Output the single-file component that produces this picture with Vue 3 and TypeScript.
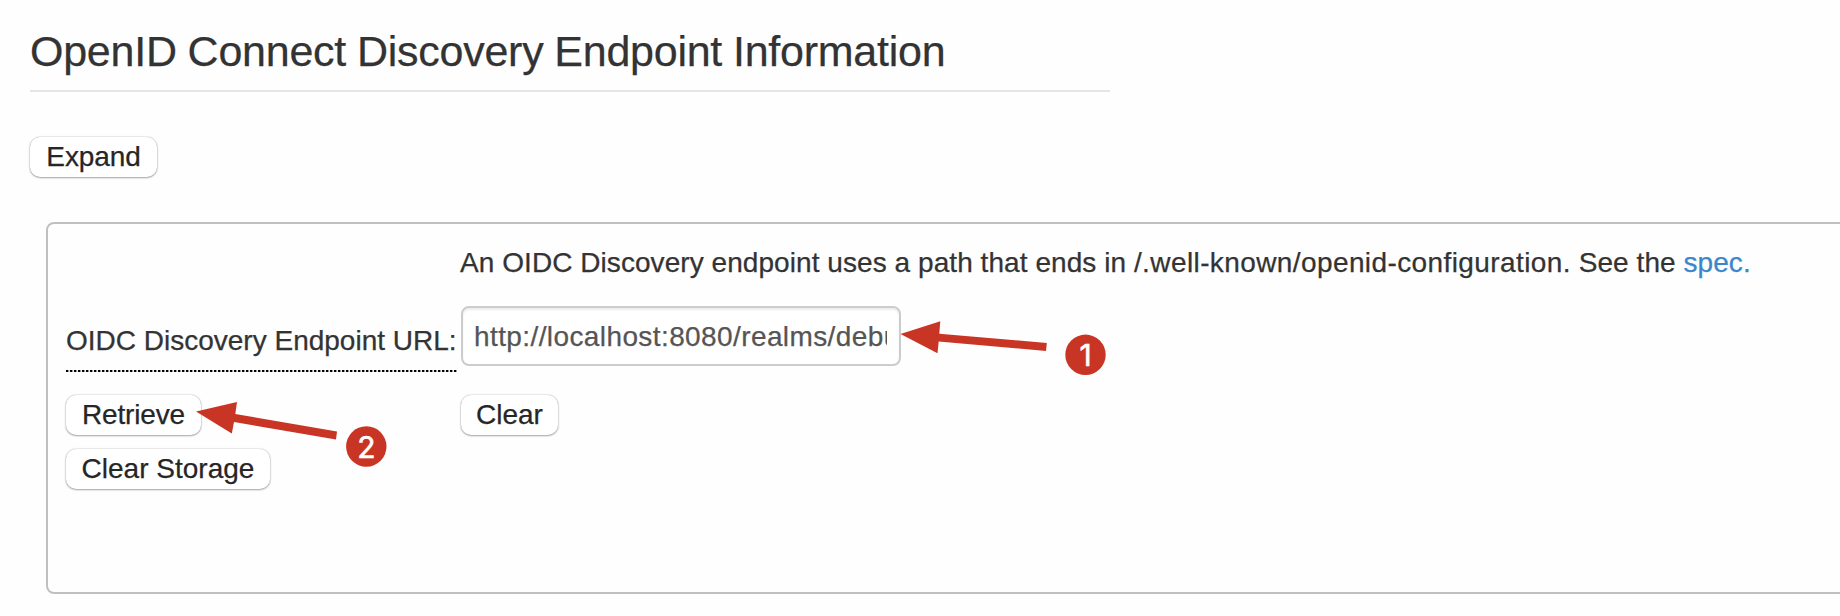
<script setup lang="ts">
import { ref } from 'vue'

interface Pointer {
  label: string
  arrow: string
  cx: number
  cy: number
}

const title = 'OpenID Connect Discovery Endpoint Information'
const endpoint = ref('http://localhost:8080/realms/debugger-testing/.well-known/openid-configuration')

const pointers: Pointer[] = [
  {
    label: '1',
    arrow: '900.5,334 940.3,321.3 939.3,333.7 1046.8,343 1046,351 938.7,341.5 937.5,353.3',
    cx: 1085.5,
    cy: 354.8,
  },
  {
    label: '2',
    arrow: '196,411.5 237,402 235.3,414 337,431.5 336,439.5 234,422 231.8,433.5',
    cx: 366.3,
    cy: 446.5,
  },
]
</script>

<template>
  <main class="page">
    <h2 class="title">{{ title }}</h2>
    <button class="btn expand" type="button">Expand</button>
    <section class="panel">
      <div class="grid">
        <p class="hint">
          An OIDC Discovery endpoint uses a path that ends in <span class="path">/.well-known/openid-configuration.</span> See the <a>spec.</a>
        </p>
        <label class="name" for="endpoint">OIDC Discovery Endpoint URL:</label>
        <input id="endpoint" v-model="endpoint" class="field" type="text" />
        <button class="btn retrieve" type="button">Retrieve</button>
        <button class="btn clear" type="button">Clear</button>
        <button class="btn storage" type="button">Clear Storage</button>
      </div>
    </section>
    <svg class="overlay" width="1840" height="616" viewBox="0 0 1840 616">
      <g v-for="p in pointers" :key="p.label">
        <polygon :points="p.arrow" />
        <circle :cx="p.cx" :cy="p.cy" r="20.2" />
        <text :x="p.cx" :y="p.cy + 11" text-anchor="middle">{{ p.label }}</text>
      </g>
    </svg>
  </main>
</template>

<style>
body {
  background: #fefefe;
  overflow: hidden;
}
</style>

<style scoped>
.page {
  position: relative;
  box-sizing: border-box;
  width: 1840px;
  height: 616px;
  padding: 20px 0 0 30px;
  overflow: hidden;
  font-family: "Liberation Sans", Arial, sans-serif;
  font-size: 28px;
  line-height: 40px;
  color: #333;
  -webkit-text-stroke: 0.25px;
}
.title {
  box-sizing: border-box;
  width: 1080px;
  height: 72px;
  margin: 0;
  padding-top: 1px;
  border-bottom: 2px solid #e5e5e5;
  font-size: 43px;
  font-weight: 400;
  line-height: 60px;
  letter-spacing: -0.25px;
  word-spacing: -0.8px;
  white-space: nowrap;
}
.btn {
  box-sizing: border-box;
  display: block;
  height: 40px;
  margin: 0;
  padding: 0;
  border: 0;
  border-radius: 10px;
  background: #fff;
  box-shadow: 0 0 1.5px rgba(0, 0, 0, 0.35), 0 1px 2px rgba(0, 0, 0, 0.3);
  font: inherit;
  line-height: 38px;
  text-align: center;
  white-space: nowrap;
  color: #262626;
}
.expand {
  width: 127px;
  margin-top: 45px;
  letter-spacing: -0.1px;
}
.panel {
  box-sizing: border-box;
  width: 1830px;
  height: 372px;
  margin: 45px 0 0 16px;
  padding: 18px 18px 0;
  border: 2px solid #c0c0c0;
  border-radius: 8px;
}
.grid {
  display: grid;
  grid-template-columns: 391px 1fr;
  grid-template-rows: 64px 60px 29px 40px 14px 40px;
  column-gap: 4px;
}
.hint {
  grid-column: 2;
  margin: 0 0 0 -1px;
  padding-top: 1px;
  letter-spacing: 0.06px;
  white-space: nowrap;
}
.path {
  letter-spacing: 0.4px;
}
.hint a {
  color: #3a87cc;
}
.name {
  grid-row: 2;
  box-sizing: border-box;
  height: 66px;
  padding-top: 15px;
  background: repeating-linear-gradient(90deg, #000 0 2px, #999 2px 3px, #eee 3px 4px) 0 100% / 100% 2px no-repeat;
  white-space: nowrap;
}
.field {
  grid-row: 2;
  box-sizing: border-box;
  width: 440px;
  height: 60px;
  margin: 0;
  padding: 2px 12px 0 11px;
  border: 2px solid #ccc;
  border-radius: 8px;
  background: #fff;
  box-shadow: inset 0 2px 2px rgba(0, 0, 0, 0.075);
  font: inherit;
  letter-spacing: 0.4px;
  color: #555;
}
.retrieve {
  grid-row: 4;
  width: 135px;
  letter-spacing: -0.15px;
}
.clear {
  grid-row: 4;
  width: 97px;
}
.storage {
  grid-row: 6;
  width: 204px;
}
.overlay {
  position: absolute;
  top: 0;
  left: 0;
  fill: #c93524;
  pointer-events: none;
  -webkit-text-stroke: 0;
}
.overlay text {
  fill: #fff;
  stroke: #fff;
  stroke-width: 0.6px;
  font-family: Inter, sans-serif;
  font-size: 30px;
  font-weight: 400;
}
</style>
